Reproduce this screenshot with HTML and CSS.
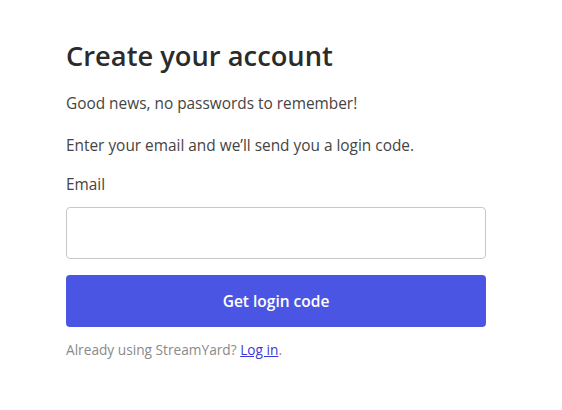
FILE: index.html
```html
<!DOCTYPE html>
<html>
<head>
<meta charset="utf-8">
<link rel="stylesheet" href="styles.css">
</head>
<body>
<main class="page">
  <h1 class="title">Create your account</h1>
  <p class="text">Good news, no passwords to remember!</p>
  <p class="text">Enter your email and we’ll send you a login code.</p>
  <label class="label" for="email">Email</label>
  <input class="input" id="email" type="email">
  <button class="button" type="button">Get login code</button>
  <p class="footer">Already using StreamYard? <a class="link" href="#">Log in</a>.</p>
</main>
</body>
</html>
```

FILE: styles.css
```css
html, body {
  margin: 0;
  padding: 0;
  background: #fff;
}
body {
  font-family: "Open Sans", Lato, sans-serif;
  color: #444;
}
.page {
  display: flex;
  flex-direction: column;
  width: 420px;
  padding: 38px 0 0 66px;
}
.title {
  margin: 0;
  font-size: 27.3px;
  font-weight: 600;
  color: #2b2b2b;
  line-height: 36px;
}
.text {
  margin: 20px 0 0;
  font-size: 15.4px;
  line-height: 20px;
}
.text + .text {
  margin-top: 22px;
}
.label {
  margin-top: 19px;
  font-size: 15.4px;
  line-height: 20px;
}
.input {
  margin-top: 12px;
  height: 52px;
  box-sizing: border-box;
  border: 1px solid #c8c8c8;
  border-radius: 4px;
  outline: none;
  font: inherit;
}
.button {
  margin-top: 16px;
  height: 52px;
  border: none;
  border-radius: 4px;
  background: #4b55e3;
  color: #fff;
  font-family: inherit;
  font-size: 15.5px;
  font-weight: 600;
}
.footer {
  margin: 14px 0 0;
  font-size: 13.7px;
  line-height: 18px;
  color: #8a8a8a;
}
.link {
  color: #3d37d6;
}
```
